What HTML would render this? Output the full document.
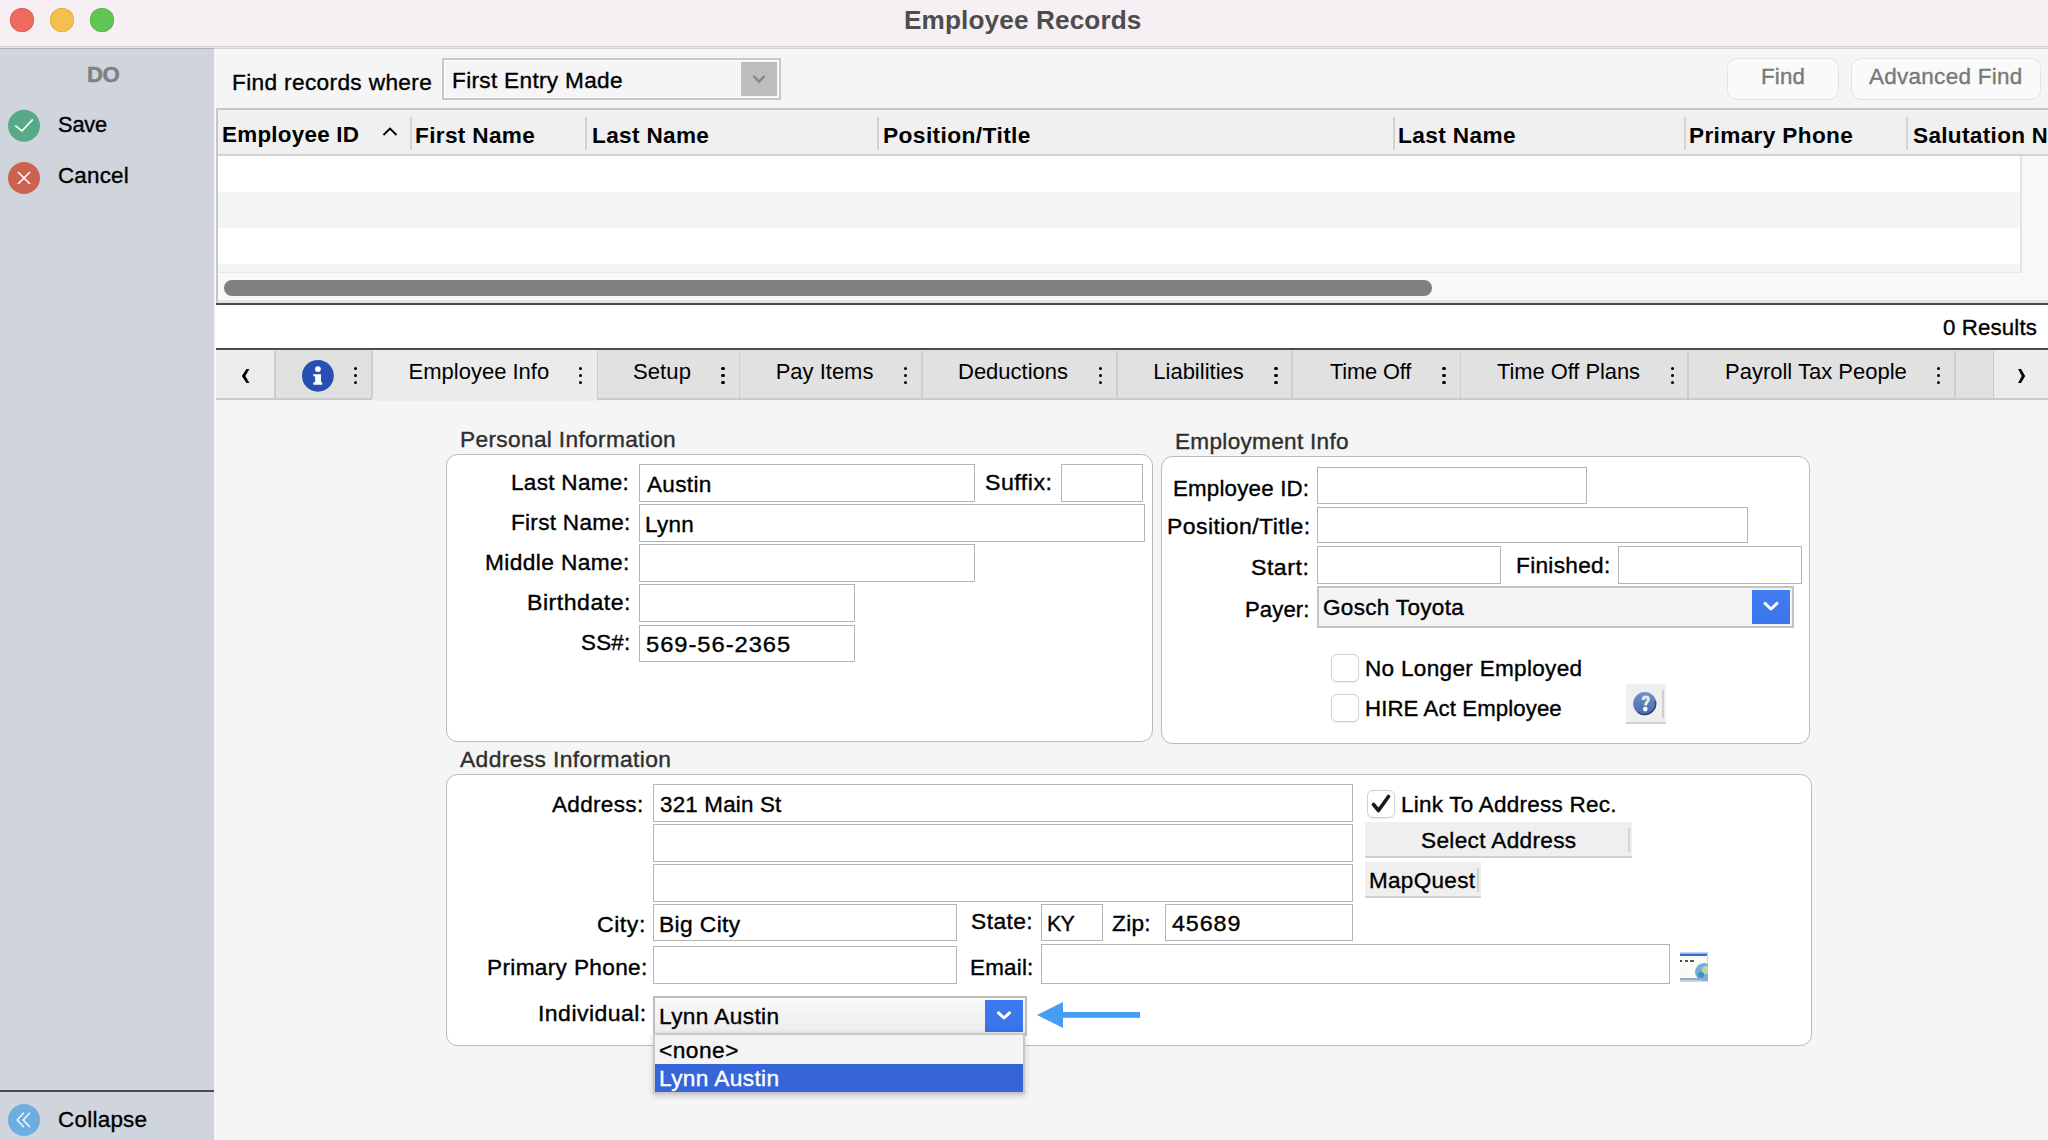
<!DOCTYPE html>
<html><head><meta charset="utf-8"><title>Employee Records</title>
<style>
html,body{margin:0;padding:0;width:2048px;height:1140px;overflow:hidden;background:#f5f5f5}
.b{position:absolute;display:block}
.t{position:absolute;white-space:pre;font-family:"Liberation Sans",sans-serif}
</style></head><body>
<div class="b" style="left:0px;top:0px;width:2048px;height:48px;background:#f6f0f4"></div>
<div class="b" style="left:0px;top:46px;width:2048px;height:1px;background:#d2cbd0"></div>
<div class="b" style="left:0px;top:47px;width:2048px;height:1px;background:#ece6ea"></div>
<div class="b" style="left:10px;top:8px;width:24px;height:24px;border-radius:50%;background:#ee6a5f;box-shadow:inset 0 0 0 0.6px #d65a4f"></div>
<div class="b" style="left:50px;top:8px;width:24px;height:24px;border-radius:50%;background:#f5bf4f;box-shadow:inset 0 0 0 0.6px #d9a63b"></div>
<div class="b" style="left:90px;top:8px;width:24px;height:24px;border-radius:50%;background:#62c655;box-shadow:inset 0 0 0 0.6px #52ad45"></div>
<div class="b" style="left:0px;top:48px;width:214px;height:1092px;background:#d0d4dd"></div>
<div class="b" style="left:0px;top:48px;width:214px;height:1px;background:#aab0bc"></div>
<div class="b" style="left:0px;top:1090px;width:214px;height:2px;background:#4a4a4a"></div>
<div class="b" style="left:214px;top:48px;width:1834px;height:1092px;background:#f5f5f5"></div>
<div class="b" style="left:214px;top:48px;width:1834px;height:1px;background:#d4d4d4"></div>
<div class="b" style="left:442px;top:58px;width:339px;height:42px;border:2px solid #c8c8c8;box-sizing:border-box;background:#f5f5f5;box-shadow:inset 0 0 0 1px #fff"></div>
<div class="b" style="left:741px;top:62px;width:36px;height:34px;background:#bdbdbd"></div>
<svg class="b" style="left:741px;top:62px" width="36" height="34"><polyline points="12.5,14 18,19.5 23.5,14" fill="none" stroke="#858585" stroke-width="2.4"/></svg>
<div class="b" style="left:1728px;top:59px;width:110px;height:40px;border-radius:9px;background:#fafafa;box-shadow:0 0 0 1px #e4e4e4, 0 1px 1px rgba(0,0,0,.04)"></div>
<div class="b" style="left:1852px;top:59px;width:188px;height:40px;border-radius:9px;background:#fafafa;box-shadow:0 0 0 1px #e4e4e4, 0 1px 1px rgba(0,0,0,.04)"></div>
<div class="b" style="left:216px;top:108px;width:1832px;height:196px;background:#fff"></div>
<div class="b" style="left:216px;top:108px;width:1832px;height:2px;background:#c6c6c6"></div>
<div class="b" style="left:216px;top:108px;width:2px;height:196px;background:#c6c6c6"></div>
<div class="b" style="left:218px;top:110px;width:1830px;height:45px;background:#f0f0f0"></div>
<div class="b" style="left:218px;top:154px;width:1830px;height:2px;background:#d2d2d2"></div>
<div class="b" style="left:409.7px;top:117px;width:2px;height:33px;background:#d3d3d3"></div>
<div class="b" style="left:585.3px;top:117px;width:2px;height:33px;background:#d3d3d3"></div>
<div class="b" style="left:876.9px;top:117px;width:2px;height:33px;background:#d3d3d3"></div>
<div class="b" style="left:1392.8px;top:117px;width:2px;height:33px;background:#d3d3d3"></div>
<div class="b" style="left:1683.7px;top:117px;width:2px;height:33px;background:#d3d3d3"></div>
<div class="b" style="left:1906.0px;top:117px;width:2px;height:33px;background:#d3d3d3"></div>
<svg class="b" style="left:380px;top:124px" width="20" height="14"><polyline points="3.5,11 10,4.5 16.5,11" fill="none" stroke="#000" stroke-width="1.9"/></svg>
<div class="b" style="left:218px;top:156px;width:1803px;height:36px;background:#fff"></div>
<div class="b" style="left:218px;top:192px;width:1803px;height:36px;background:#f3f4f4"></div>
<div class="b" style="left:218px;top:228px;width:1803px;height:36px;background:#fff"></div>
<div class="b" style="left:218px;top:264px;width:1803px;height:8px;background:#f3f4f4"></div>
<div class="b" style="left:2021px;top:156px;width:27px;height:146px;background:#f8f8f8"></div>
<div class="b" style="left:2020px;top:156px;width:2px;height:117px;background:#e3e3e3"></div>
<div class="b" style="left:218px;top:272px;width:1803px;height:1px;background:#e6e6e6"></div>
<div class="b" style="left:218px;top:273px;width:1803px;height:29px;background:#f8f8f8"></div>
<div class="b" style="left:224px;top:280px;width:1208px;height:16px;background:#7f7f7f;border-radius:8px"></div>
<div class="b" style="left:218px;top:300px;width:1830px;height:3px;background:#e4e4e4"></div>
<div class="b" style="left:216px;top:303px;width:1832px;height:2.5px;background:#4b4b4b"></div>
<div class="b" style="left:216px;top:305px;width:1832px;height:43px;background:#fff"></div>
<div class="b" style="left:216px;top:348px;width:1832px;height:2px;background:#4b4b4b"></div>
<div class="b" style="left:216px;top:350px;width:1832px;height:50px;background:#e1e1e1"></div>
<div class="b" style="left:216px;top:398px;width:1832px;height:2px;background:#c9c9c9"></div>
<div class="b" style="left:216px;top:350px;width:59px;height:50px;background:#ececec;border-bottom:2px solid #c9c9c9;box-sizing:border-box"></div>
<div class="b" style="left:372px;top:350px;width:225px;height:51px;background:#ebebeb"></div>
<div class="b" style="left:1993px;top:350px;width:55px;height:50px;background:#ececec;border-bottom:2px solid #c9c9c9;box-sizing:border-box"></div>
<div class="b" style="left:274.3px;top:351px;width:1.5px;height:47px;background:#cdcdcd"></div>
<div class="b" style="left:371.4px;top:351px;width:1.5px;height:47px;background:#cdcdcd"></div>
<div class="b" style="left:596.9px;top:351px;width:1.5px;height:47px;background:#cdcdcd"></div>
<div class="b" style="left:738.5px;top:351px;width:1.5px;height:47px;background:#cdcdcd"></div>
<div class="b" style="left:921.2px;top:351px;width:1.5px;height:47px;background:#cdcdcd"></div>
<div class="b" style="left:1116.3px;top:351px;width:1.5px;height:47px;background:#cdcdcd"></div>
<div class="b" style="left:1291.4px;top:351px;width:1.5px;height:47px;background:#cdcdcd"></div>
<div class="b" style="left:1459.6px;top:351px;width:1.5px;height:47px;background:#cdcdcd"></div>
<div class="b" style="left:1687.3px;top:351px;width:1.5px;height:47px;background:#cdcdcd"></div>
<div class="b" style="left:1954.2px;top:351px;width:1.5px;height:47px;background:#cdcdcd"></div>
<div class="b" style="left:1992.5px;top:351px;width:1.5px;height:47px;background:#cdcdcd"></div>
<svg class="b" style="left:0px;top:0px;width:2048px;height:400px" width="2048" height="400"><polygon points="246.5,369.1 249.4,369.1 245.3,376.1 249.4,382.9 246.5,382.9 241.9,376.1" fill="#000"/><polygon points="2018.1,369.1 2021,369.1 2025.2,375.9 2021,382.9 2018.1,382.9 2021.8,375.9" fill="#000"/></svg>
<svg class="b" style="left:300px;top:358px" width="36" height="36">
<circle cx="17.9" cy="17.8" r="15.9" fill="#2850b0"/>
<circle cx="17.9" cy="11.1" r="2.9" fill="#fff"/>
<path d="M13.3,16.2 H21 V24.2 H22.2 V26.7 H13.3 V24.2 H15.1 V18.2 H13.3 Z" fill="#fff"/>
</svg>
<div class="b" style="left:354.25px;top:366.65px;width:3.1px;height:3.1px;border-radius:50%;background:#000"></div>
<div class="b" style="left:354.25px;top:373.95px;width:3.1px;height:3.1px;border-radius:50%;background:#000"></div>
<div class="b" style="left:354.25px;top:381.25px;width:3.1px;height:3.1px;border-radius:50%;background:#000"></div>
<div class="b" style="left:578.95px;top:366.65px;width:3.1px;height:3.1px;border-radius:50%;background:#000"></div>
<div class="b" style="left:578.95px;top:373.95px;width:3.1px;height:3.1px;border-radius:50%;background:#000"></div>
<div class="b" style="left:578.95px;top:381.25px;width:3.1px;height:3.1px;border-radius:50%;background:#000"></div>
<div class="b" style="left:721.45px;top:366.65px;width:3.1px;height:3.1px;border-radius:50%;background:#000"></div>
<div class="b" style="left:721.45px;top:373.95px;width:3.1px;height:3.1px;border-radius:50%;background:#000"></div>
<div class="b" style="left:721.45px;top:381.25px;width:3.1px;height:3.1px;border-radius:50%;background:#000"></div>
<div class="b" style="left:904.05px;top:366.65px;width:3.1px;height:3.1px;border-radius:50%;background:#000"></div>
<div class="b" style="left:904.05px;top:373.95px;width:3.1px;height:3.1px;border-radius:50%;background:#000"></div>
<div class="b" style="left:904.05px;top:381.25px;width:3.1px;height:3.1px;border-radius:50%;background:#000"></div>
<div class="b" style="left:1099.15px;top:366.65px;width:3.1px;height:3.1px;border-radius:50%;background:#000"></div>
<div class="b" style="left:1099.15px;top:373.95px;width:3.1px;height:3.1px;border-radius:50%;background:#000"></div>
<div class="b" style="left:1099.15px;top:381.25px;width:3.1px;height:3.1px;border-radius:50%;background:#000"></div>
<div class="b" style="left:1274.45px;top:366.65px;width:3.1px;height:3.1px;border-radius:50%;background:#000"></div>
<div class="b" style="left:1274.45px;top:373.95px;width:3.1px;height:3.1px;border-radius:50%;background:#000"></div>
<div class="b" style="left:1274.45px;top:381.25px;width:3.1px;height:3.1px;border-radius:50%;background:#000"></div>
<div class="b" style="left:1442.45px;top:366.65px;width:3.1px;height:3.1px;border-radius:50%;background:#000"></div>
<div class="b" style="left:1442.45px;top:373.95px;width:3.1px;height:3.1px;border-radius:50%;background:#000"></div>
<div class="b" style="left:1442.45px;top:381.25px;width:3.1px;height:3.1px;border-radius:50%;background:#000"></div>
<div class="b" style="left:1671.35px;top:366.65px;width:3.1px;height:3.1px;border-radius:50%;background:#000"></div>
<div class="b" style="left:1671.35px;top:373.95px;width:3.1px;height:3.1px;border-radius:50%;background:#000"></div>
<div class="b" style="left:1671.35px;top:381.25px;width:3.1px;height:3.1px;border-radius:50%;background:#000"></div>
<div class="b" style="left:1937.25px;top:366.65px;width:3.1px;height:3.1px;border-radius:50%;background:#000"></div>
<div class="b" style="left:1937.25px;top:373.95px;width:3.1px;height:3.1px;border-radius:50%;background:#000"></div>
<div class="b" style="left:1937.25px;top:381.25px;width:3.1px;height:3.1px;border-radius:50%;background:#000"></div>
<div class="b" style="left:446px;top:454px;width:707px;height:288px;border:1.5px solid #b9b9b9;border-radius:11.5px;background:#fff;box-sizing:border-box"></div>
<div class="b" style="left:1161px;top:456px;width:649px;height:288px;border:1.5px solid #b9b9b9;border-radius:11.5px;background:#fff;box-sizing:border-box"></div>
<div class="b" style="left:446px;top:774px;width:1366px;height:272px;border:1.5px solid #b9b9b9;border-radius:11.5px;background:#fff;box-sizing:border-box"></div>
<div class="b" style="left:639px;top:464px;width:336px;height:38px;background:#fff;border:1px solid #b5b5b5;box-sizing:border-box"></div>
<div class="b" style="left:1061px;top:464px;width:82px;height:38px;background:#fff;border:1px solid #b5b5b5;box-sizing:border-box"></div>
<div class="b" style="left:639px;top:504px;width:506px;height:38px;background:#fff;border:1px solid #b5b5b5;box-sizing:border-box"></div>
<div class="b" style="left:639px;top:544px;width:336px;height:38px;background:#fff;border:1px solid #b5b5b5;box-sizing:border-box"></div>
<div class="b" style="left:639px;top:584px;width:216px;height:38px;background:#fff;border:1px solid #b5b5b5;box-sizing:border-box"></div>
<div class="b" style="left:639px;top:625px;width:216px;height:37px;background:#fff;border:1px solid #b5b5b5;box-sizing:border-box"></div>
<div class="b" style="left:1317px;top:467px;width:270px;height:37px;background:#fff;border:1px solid #b5b5b5;box-sizing:border-box"></div>
<div class="b" style="left:1317px;top:507px;width:431px;height:36px;background:#fff;border:1px solid #b5b5b5;box-sizing:border-box"></div>
<div class="b" style="left:1317px;top:546px;width:184px;height:38px;background:#fff;border:1px solid #b5b5b5;box-sizing:border-box"></div>
<div class="b" style="left:1618px;top:546px;width:184px;height:38px;background:#fff;border:1px solid #b5b5b5;box-sizing:border-box"></div>
<div class="b" style="left:653px;top:784px;width:700px;height:38px;background:#fff;border:1px solid #b5b5b5;box-sizing:border-box"></div>
<div class="b" style="left:653px;top:824px;width:700px;height:38px;background:#fff;border:1px solid #b5b5b5;box-sizing:border-box"></div>
<div class="b" style="left:653px;top:864px;width:700px;height:38px;background:#fff;border:1px solid #b5b5b5;box-sizing:border-box"></div>
<div class="b" style="left:653px;top:904px;width:304px;height:37px;background:#fff;border:1px solid #b5b5b5;box-sizing:border-box"></div>
<div class="b" style="left:1041px;top:904px;width:62px;height:37px;background:#fff;border:1px solid #b5b5b5;box-sizing:border-box"></div>
<div class="b" style="left:1165px;top:904px;width:188px;height:37px;background:#fff;border:1px solid #b5b5b5;box-sizing:border-box"></div>
<div class="b" style="left:653px;top:946px;width:304px;height:38px;background:#fff;border:1px solid #b5b5b5;box-sizing:border-box"></div>
<div class="b" style="left:1041px;top:944px;width:629px;height:40px;background:#fff;border:1px solid #b5b5b5;box-sizing:border-box"></div>
<div class="b" style="left:1317px;top:586px;width:477px;height:42px;border:2px solid #c4c4c4;box-sizing:border-box;background:#f4f4f4"></div>
<div class="b" style="left:1752px;top:590px;width:38px;height:34px;background:linear-gradient(#437cf3,#3b74ea)"></div>
<svg class="b" style="left:1752px;top:590px" width="38" height="34"><polyline points="13,13.3 19,19 25,13.3" fill="none" stroke="#fff" stroke-width="3" stroke-linecap="round" stroke-linejoin="round"/></svg>
<div class="b" style="left:1331px;top:654px;width:28px;height:28px;border-radius:6px;background:#fff;border:1px solid #d2d2d2;box-sizing:border-box;box-shadow:0 0.5px 1px rgba(0,0,0,.08)"></div>
<div class="b" style="left:1331px;top:694px;width:28px;height:28px;border-radius:6px;background:#fff;border:1px solid #d2d2d2;box-sizing:border-box;box-shadow:0 0.5px 1px rgba(0,0,0,.08)"></div>
<div class="b" style="left:1367px;top:790px;width:28px;height:28px;border-radius:6px;background:#fff;border:1px solid #d2d2d2;box-sizing:border-box;box-shadow:0 0.5px 1px rgba(0,0,0,.08)"></div><svg class="b" style="left:1367px;top:790px" width="28" height="28"><polyline points="6.5,14.5 11.5,20.5 21.5,6.5" fill="none" stroke="#1a1a1a" stroke-width="3.6" stroke-linejoin="round" stroke-linecap="round"/></svg>
<div class="b" style="left:1626px;top:684px;width:40px;height:40px;background:#efefef;border-bottom:2px solid #cfcfcf;box-sizing:border-box"></div>
<div class="b" style="left:1662px;top:690px;width:2px;height:28px;background:#d0d0d0"></div>
<svg class="b" style="left:1630px;top:689px" width="30" height="30">
<defs><linearGradient id="hg" x1="0" y1="0" x2="0" y2="1"><stop offset="0" stop-color="#6f8fcc"/><stop offset="1" stop-color="#4a6aa8"/></linearGradient></defs>
<circle cx="14.8" cy="14.6" r="11.6" fill="url(#hg)"/><path d="M25.4,12 A11.3,11.3 0 0 1 8,23.5" fill="none" stroke="#2a4578" stroke-width="1.4"/>
<path d="M13.2,10.9 C13.2,8.7 14.4,8.1 15.8,8.1 C17.4,8.1 18.4,9 18.4,10.3 C18.4,12.6 15.6,13 15.6,16.4" fill="none" stroke="#e8e8e8" stroke-width="3"/>
<circle cx="15.3" cy="20.1" r="2.3" fill="#fff"/>
</svg>
<div class="b" style="left:1365px;top:822px;width:267px;height:36px;background:#efefef;border-bottom:2px solid #d0d0d0;box-sizing:border-box"></div>
<div class="b" style="left:1628px;top:828px;width:2px;height:24px;background:#d2d2d2"></div>
<div class="b" style="left:1365px;top:862px;width:116px;height:36px;background:#efefef;border-bottom:2px solid #d0d0d0;box-sizing:border-box"></div>
<div class="b" style="left:1477px;top:868px;width:2px;height:24px;background:#d2d2d2"></div>
<svg class="b" style="left:1680px;top:952px" width="28" height="30">
<rect x="0" y="0" width="28" height="30" fill="#c9d3ef"/>
<rect x="0" y="1" width="27" height="28" fill="#fbfbf5"/>
<rect x="0" y="1.5" width="27" height="2.5" fill="#2f6fd0"/>
<rect x="0" y="8" width="2" height="2" fill="#444"/><rect x="5" y="8" width="3" height="2" fill="#555"/><rect x="10" y="8" width="4" height="2" fill="#555"/>
<circle cx="24" cy="20" r="9" fill="#6fb0d8"/>
<circle cx="26" cy="18" r="4" fill="#b8d9a0"/>
<circle cx="21" cy="23" r="3" fill="#3d8fd0"/>
<rect x="0" y="26" width="28" height="2.5" fill="#9aa3c8"/>
</svg>
<div class="b" style="left:653px;top:996px;width:374px;height:40px;border:2px solid #bdbdbd;box-sizing:border-box;background:linear-gradient(#fafafa,#ececec)"></div>
<div class="b" style="left:985px;top:1000px;width:38px;height:32px;background:linear-gradient(#3f7af3,#3a72e8)"></div>
<svg class="b" style="left:985px;top:1000px" width="38" height="32"><polyline points="13.5,12.8 19,18 24.5,12.8" fill="none" stroke="#fff" stroke-width="3" stroke-linecap="round" stroke-linejoin="round"/></svg>
<svg class="b" style="left:1030px;top:995px" width="120" height="40"><polygon points="7,20 33,7 33,33" fill="#469df5"/><rect x="32" y="17" width="78" height="5.8" fill="#469df5"/></svg>
<svg class="b" style="left:0px;top:100px" width="50" height="100">
<circle cx="24" cy="25.8" r="16" fill="#57aa88"/>
<polyline points="15.2,25.7 22,31 32.8,19.4" fill="none" stroke="#fff" stroke-width="1.6"/>
<circle cx="24" cy="78" r="16" fill="#cc6350"/>
<path d="M18,72 L30,84 M30,72 L18,84" stroke="#fff" stroke-width="1.6"/>
</svg>
<svg class="b" style="left:0px;top:1100px" width="50" height="40">
<circle cx="24" cy="20" r="16" fill="#6daee0"/>
<polyline points="23.8,12.8 17.2,20 23.8,27" fill="none" stroke="#fff" stroke-width="1.3"/>
<polyline points="29.8,12.8 23.2,20 29.8,27" fill="none" stroke="#fff" stroke-width="1.3"/>
</svg>
<div class="t" style="left:903.59px;top:7.09px;font-size:26px;line-height:26px;font-weight:700;color:#4d4d4d;letter-spacing:0.108px;transform:scaleX(1.0070);transform-origin:0 0;">Employee Records</div>
<div class="t" style="left:86.61px;top:64.25px;font-size:22.5px;line-height:22.5px;font-weight:700;color:#808080;letter-spacing:-0.481px;transform:scaleX(0.9853);transform-origin:0 0;-webkit-text-stroke:0.5px #808080;">DO</div>
<div class="t" style="left:58.11px;top:114.08px;font-size:22px;line-height:22px;font-weight:400;color:#000;letter-spacing:-0.153px;transform:scaleX(0.9907);transform-origin:0 0;-webkit-text-stroke:0.35px #000;">Save</div>
<div class="t" style="left:58.08px;top:164.88px;font-size:22px;line-height:22px;font-weight:400;color:#000;letter-spacing:0.217px;transform:scaleX(1.0166);transform-origin:0 0;-webkit-text-stroke:0.35px #000;">Cancel</div>
<div class="t" style="left:58.18px;top:1109.08px;font-size:22px;line-height:22px;font-weight:400;color:#000;letter-spacing:0.240px;transform:scaleX(1.0203);transform-origin:0 0;-webkit-text-stroke:0.35px #000;">Collapse</div>
<div class="t" style="left:232.47px;top:71.88px;font-size:22px;line-height:22px;font-weight:400;color:#000;letter-spacing:0.326px;transform:scaleX(1.0306);transform-origin:0 0;-webkit-text-stroke:0.35px #000;">Find records where</div>
<div class="t" style="left:451.57px;top:70.08px;font-size:22px;line-height:22px;font-weight:400;color:#000;letter-spacing:0.297px;transform:scaleX(1.0286);transform-origin:0 0;-webkit-text-stroke:0.35px #000;">First Entry Made</div>
<div class="t" style="left:1760.59px;top:66.38px;font-size:22px;line-height:22px;font-weight:400;color:#787878;letter-spacing:0.171px;transform:scaleX(1.0128);transform-origin:0 0;-webkit-text-stroke:0.35px #787878;">Find</div>
<div class="t" style="left:1869.00px;top:66.38px;font-size:22px;line-height:22px;font-weight:400;color:#787878;letter-spacing:0.264px;transform:scaleX(1.0222);transform-origin:0 0;-webkit-text-stroke:0.35px #787878;">Advanced Find</div>
<div class="t" style="left:221.88px;top:124.38px;font-size:22px;line-height:22px;font-weight:700;color:#000;letter-spacing:0.243px;transform:scaleX(1.0190);transform-origin:0 0;">Employee ID</div>
<div class="t" style="left:415.37px;top:124.58px;font-size:22px;line-height:22px;font-weight:700;color:#000;letter-spacing:0.331px;transform:scaleX(1.0272);transform-origin:0 0;">First Name</div>
<div class="t" style="left:591.57px;top:124.58px;font-size:22px;line-height:22px;font-weight:700;color:#000;letter-spacing:0.339px;transform:scaleX(1.0253);transform-origin:0 0;">Last Name</div>
<div class="t" style="left:883.36px;top:124.58px;font-size:22px;line-height:22px;font-weight:700;color:#000;letter-spacing:0.361px;transform:scaleX(1.0356);transform-origin:0 0;">Position/Title</div>
<div class="t" style="left:1398.47px;top:124.58px;font-size:22px;line-height:22px;font-weight:700;color:#000;letter-spacing:0.387px;transform:scaleX(1.0289);transform-origin:0 0;">Last Name</div>
<div class="t" style="left:1689.47px;top:124.58px;font-size:22px;line-height:22px;font-weight:700;color:#000;letter-spacing:0.343px;transform:scaleX(1.0275);transform-origin:0 0;">Primary Phone</div>
<div class="t" style="left:1912.80px;top:124.58px;font-size:22px;line-height:22px;font-weight:700;color:#000;letter-spacing:0.308px;transform:scaleX(1.0269);transform-origin:0 0;">Salutation</div>
<div class="t" style="left:2031.70px;top:124.58px;font-size:22px;line-height:22px;font-weight:700;color:#000;letter-spacing:0.000px;">N</div>
<div class="t" style="left:1943.40px;top:317.08px;font-size:22px;line-height:22px;font-weight:400;color:#000;letter-spacing:0.136px;transform:scaleX(1.0120);transform-origin:0 0;-webkit-text-stroke:0.35px #000;">0 Results</div>
<div class="t" style="left:408.60px;top:361.28px;font-size:22px;line-height:22px;font-weight:400;color:#000;letter-spacing:-0.004px;-webkit-text-stroke:0.35px #000;-webkit-text-stroke:0;">Employee Info</div>
<div class="t" style="left:633.30px;top:361.28px;font-size:22px;line-height:22px;font-weight:400;color:#000;letter-spacing:0.055px;transform:scaleX(1.0039);transform-origin:0 0;-webkit-text-stroke:0.35px #000;-webkit-text-stroke:0;">Setup</div>
<div class="t" style="left:775.70px;top:361.28px;font-size:22px;line-height:22px;font-weight:400;color:#000;letter-spacing:-0.007px;-webkit-text-stroke:0.35px #000;-webkit-text-stroke:0;">Pay Items</div>
<div class="t" style="left:958.00px;top:361.28px;font-size:22px;line-height:22px;font-weight:400;color:#000;letter-spacing:-0.004px;-webkit-text-stroke:0.35px #000;-webkit-text-stroke:0;">Deductions</div>
<div class="t" style="left:1153.30px;top:361.28px;font-size:22px;line-height:22px;font-weight:400;color:#000;letter-spacing:-0.005px;-webkit-text-stroke:0.35px #000;-webkit-text-stroke:0;">Liabilities</div>
<div class="t" style="left:1329.60px;top:361.28px;font-size:22px;line-height:22px;font-weight:400;color:#000;letter-spacing:-0.123px;transform:scaleX(0.9898);transform-origin:0 0;-webkit-text-stroke:0.35px #000;-webkit-text-stroke:0;">Time Off</div>
<div class="t" style="left:1497.00px;top:361.28px;font-size:22px;line-height:22px;font-weight:400;color:#000;letter-spacing:-0.049px;transform:scaleX(0.9956);transform-origin:0 0;-webkit-text-stroke:0.35px #000;-webkit-text-stroke:0;">Time Off Plans</div>
<div class="t" style="left:1725.00px;top:361.28px;font-size:22px;line-height:22px;font-weight:400;color:#000;letter-spacing:0.001px;-webkit-text-stroke:0.35px #000;-webkit-text-stroke:0;">Payroll Tax People</div>
<div class="t" style="left:459.97px;top:428.88px;font-size:22px;line-height:22px;font-weight:400;color:#2e2e2e;letter-spacing:0.322px;transform:scaleX(1.0315);transform-origin:0 0;-webkit-text-stroke:0.35px #2e2e2e;">Personal Information</div>
<div class="t" style="left:511.48px;top:472.08px;font-size:22px;line-height:22px;font-weight:400;color:#000;letter-spacing:0.289px;transform:scaleX(1.0241);transform-origin:0 0;-webkit-text-stroke:0.35px #000;">Last Name:</div>
<div class="t" style="left:511.47px;top:511.88px;font-size:22px;line-height:22px;font-weight:400;color:#000;letter-spacing:0.275px;transform:scaleX(1.0253);transform-origin:0 0;-webkit-text-stroke:0.35px #000;">First Name:</div>
<div class="t" style="left:485.47px;top:552.08px;font-size:22px;line-height:22px;font-weight:400;color:#000;letter-spacing:0.379px;transform:scaleX(1.0322);transform-origin:0 0;-webkit-text-stroke:0.35px #000;">Middle Name:</div>
<div class="t" style="left:526.95px;top:592.38px;font-size:22px;line-height:22px;font-weight:400;color:#000;letter-spacing:0.484px;transform:scaleX(1.0497);transform-origin:0 0;-webkit-text-stroke:0.35px #000;">Birthdate:</div>
<div class="t" style="left:580.58px;top:632.08px;font-size:22px;line-height:22px;font-weight:400;color:#000;letter-spacing:0.249px;transform:scaleX(1.0166);transform-origin:0 0;-webkit-text-stroke:0.35px #000;">SS#:</div>
<div class="t" style="left:984.95px;top:472.48px;font-size:22px;line-height:22px;font-weight:400;color:#000;letter-spacing:0.481px;transform:scaleX(1.0518);transform-origin:0 0;-webkit-text-stroke:0.35px #000;">Suffix:</div>
<div class="t" style="left:646.50px;top:474.08px;font-size:22px;line-height:22px;font-weight:400;color:#000;letter-spacing:0.301px;transform:scaleX(1.0258);transform-origin:0 0;-webkit-text-stroke:0.35px #000;">Austin</div>
<div class="t" style="left:645.48px;top:514.08px;font-size:22px;line-height:22px;font-weight:400;color:#000;letter-spacing:0.301px;transform:scaleX(1.0207);transform-origin:0 0;-webkit-text-stroke:0.35px #000;">Lynn</div>
<div class="t" style="left:645.60px;top:634.08px;font-size:22px;line-height:22px;font-weight:400;color:#000;letter-spacing:0.898px;transform:scaleX(1.0777);transform-origin:0 0;-webkit-text-stroke:0.35px #000;">569-56-2365</div>
<div class="t" style="left:1175.47px;top:430.88px;font-size:22px;line-height:22px;font-weight:400;color:#2e2e2e;letter-spacing:0.295px;transform:scaleX(1.0258);transform-origin:0 0;-webkit-text-stroke:0.35px #2e2e2e;">Employment Info</div>
<div class="t" style="left:1172.98px;top:477.78px;font-size:22px;line-height:22px;font-weight:400;color:#000;letter-spacing:0.177px;transform:scaleX(1.0152);transform-origin:0 0;-webkit-text-stroke:0.35px #000;">Employee ID:</div>
<div class="t" style="left:1166.75px;top:515.98px;font-size:22px;line-height:22px;font-weight:400;color:#000;letter-spacing:0.402px;transform:scaleX(1.0456);transform-origin:0 0;-webkit-text-stroke:0.35px #000;">Position/Title:</div>
<div class="t" style="left:1250.65px;top:557.48px;font-size:22px;line-height:22px;font-weight:400;color:#000;letter-spacing:0.489px;transform:scaleX(1.0509);transform-origin:0 0;-webkit-text-stroke:0.35px #000;">Start:</div>
<div class="t" style="left:1516.27px;top:555.48px;font-size:22px;line-height:22px;font-weight:400;color:#000;letter-spacing:0.301px;transform:scaleX(1.0284);transform-origin:0 0;-webkit-text-stroke:0.35px #000;">Finished:</div>
<div class="t" style="left:1244.99px;top:599.38px;font-size:22px;line-height:22px;font-weight:400;color:#000;letter-spacing:0.082px;transform:scaleX(1.0067);transform-origin:0 0;-webkit-text-stroke:0.35px #000;">Payer:</div>
<div class="t" style="left:1322.68px;top:597.38px;font-size:22px;line-height:22px;font-weight:400;color:#000;letter-spacing:0.294px;transform:scaleX(1.0247);transform-origin:0 0;-webkit-text-stroke:0.35px #000;">Gosch Toyota</div>
<div class="t" style="left:1364.97px;top:657.78px;font-size:22px;line-height:22px;font-weight:400;color:#000;letter-spacing:0.297px;transform:scaleX(1.0253);transform-origin:0 0;-webkit-text-stroke:0.35px #000;">No Longer Employed</div>
<div class="t" style="left:1364.99px;top:697.88px;font-size:22px;line-height:22px;font-weight:400;color:#000;letter-spacing:0.109px;transform:scaleX(1.0091);transform-origin:0 0;-webkit-text-stroke:0.35px #000;">HIRE Act Employee</div>
<div class="t" style="left:460.00px;top:748.88px;font-size:22px;line-height:22px;font-weight:400;color:#2e2e2e;letter-spacing:0.377px;transform:scaleX(1.0359);transform-origin:0 0;-webkit-text-stroke:0.35px #2e2e2e;">Address Information</div>
<div class="t" style="left:552.00px;top:793.88px;font-size:22px;line-height:22px;font-weight:400;color:#000;letter-spacing:0.299px;transform:scaleX(1.0251);transform-origin:0 0;-webkit-text-stroke:0.35px #000;">Address:</div>
<div class="t" style="left:660.00px;top:793.58px;font-size:22px;line-height:22px;font-weight:400;color:#000;letter-spacing:0.192px;transform:scaleX(1.0167);transform-origin:0 0;-webkit-text-stroke:0.35px #000;">321 Main St</div>
<div class="t" style="left:596.85px;top:913.78px;font-size:22px;line-height:22px;font-weight:400;color:#000;letter-spacing:0.501px;transform:scaleX(1.0503);transform-origin:0 0;-webkit-text-stroke:0.35px #000;">City:</div>
<div class="t" style="left:658.96px;top:913.78px;font-size:22px;line-height:22px;font-weight:400;color:#000;letter-spacing:0.372px;transform:scaleX(1.0361);transform-origin:0 0;-webkit-text-stroke:0.35px #000;">Big City</div>
<div class="t" style="left:970.76px;top:911.38px;font-size:22px;line-height:22px;font-weight:400;color:#000;letter-spacing:0.398px;transform:scaleX(1.0373);transform-origin:0 0;-webkit-text-stroke:0.35px #000;">State:</div>
<div class="t" style="left:1046.83px;top:913.48px;font-size:22px;line-height:22px;font-weight:400;color:#000;letter-spacing:-0.809px;transform:scaleX(0.9726);transform-origin:0 0;-webkit-text-stroke:0.35px #000;">KY</div>
<div class="t" style="left:1111.90px;top:913.08px;font-size:22px;line-height:22px;font-weight:400;color:#000;letter-spacing:0.315px;transform:scaleX(1.0273);transform-origin:0 0;-webkit-text-stroke:0.35px #000;">Zip:</div>
<div class="t" style="left:1171.60px;top:913.08px;font-size:22px;line-height:22px;font-weight:400;color:#000;letter-spacing:0.845px;transform:scaleX(1.0587);transform-origin:0 0;-webkit-text-stroke:0.35px #000;">45689</div>
<div class="t" style="left:486.77px;top:957.48px;font-size:22px;line-height:22px;font-weight:400;color:#000;letter-spacing:0.321px;transform:scaleX(1.0288);transform-origin:0 0;-webkit-text-stroke:0.35px #000;">Primary Phone:</div>
<div class="t" style="left:970.28px;top:957.48px;font-size:22px;line-height:22px;font-weight:400;color:#000;letter-spacing:0.215px;transform:scaleX(1.0185);transform-origin:0 0;-webkit-text-stroke:0.35px #000;">Email:</div>
<div class="t" style="left:537.91px;top:1003.48px;font-size:22px;line-height:22px;font-weight:400;color:#000;letter-spacing:0.432px;transform:scaleX(1.0471);transform-origin:0 0;-webkit-text-stroke:0.35px #000;">Individual:</div>
<div class="t" style="left:659.07px;top:1005.98px;font-size:22px;line-height:22px;font-weight:400;color:#000;letter-spacing:0.344px;transform:scaleX(1.0317);transform-origin:0 0;-webkit-text-stroke:0.35px #000;">Lynn Austin</div>
<div class="t" style="left:1401.38px;top:794.28px;font-size:22px;line-height:22px;font-weight:400;color:#000;letter-spacing:0.238px;transform:scaleX(1.0225);transform-origin:0 0;-webkit-text-stroke:0.35px #000;">Link To Address Rec.</div>
<div class="t" style="left:1420.87px;top:829.88px;font-size:22px;line-height:22px;font-weight:400;color:#000;letter-spacing:0.315px;transform:scaleX(1.0287);transform-origin:0 0;-webkit-text-stroke:0.35px #000;">Select Address</div>
<div class="t" style="left:1368.88px;top:870.08px;font-size:22px;line-height:22px;font-weight:400;color:#000;letter-spacing:0.309px;transform:scaleX(1.0220);transform-origin:0 0;-webkit-text-stroke:0.35px #000;">MapQuest</div>
<div class="b" style="left:653px;top:1033px;width:372px;height:61px;background:#f4f4f4;border:2px solid #c8c8c8;box-sizing:border-box;box-shadow:0 2px 6px rgba(0,0,0,.18)"></div>
<div class="b" style="left:655px;top:1064px;width:368px;height:28px;background:#3565d8"></div>
<div class="t" style="left:659.07px;top:1039.68px;font-size:22px;line-height:22px;font-weight:400;color:#000;letter-spacing:0.456px;transform:scaleX(1.0324);transform-origin:0 0;-webkit-text-stroke:0.35px #000;">&lt;none&gt;</div>
<div class="t" style="left:659.07px;top:1067.88px;font-size:22px;line-height:22px;font-weight:400;color:#fff;letter-spacing:0.344px;transform:scaleX(1.0317);transform-origin:0 0;-webkit-text-stroke:0.35px #fff;">Lynn Austin</div>
</body></html>
